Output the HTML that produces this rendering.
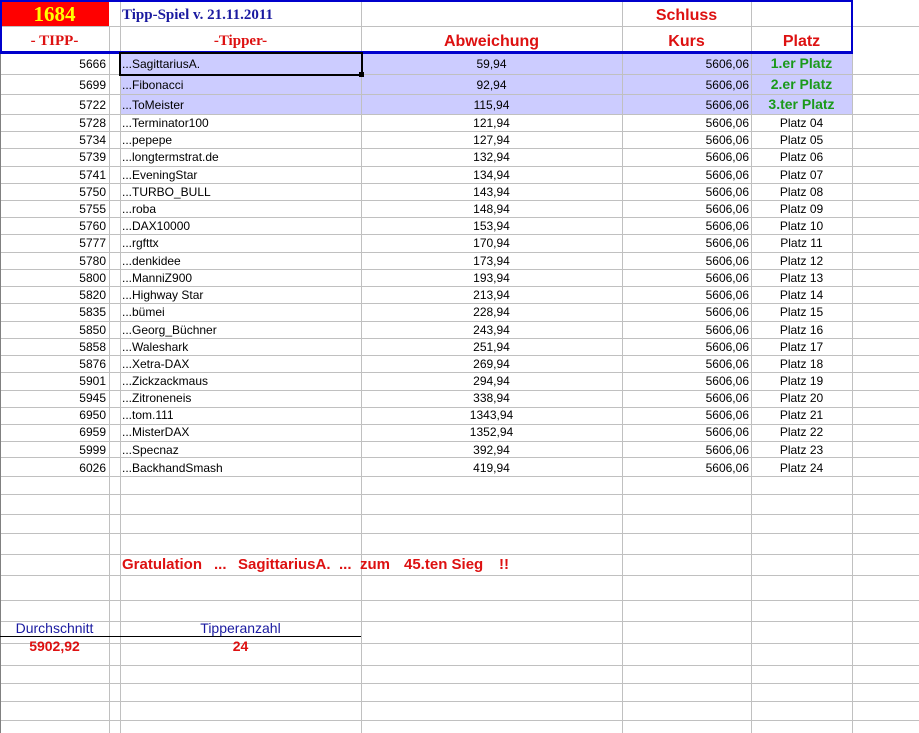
<!DOCTYPE html>
<html><head><meta charset="utf-8"><style>
body{margin:0;width:919px;height:733px;overflow:hidden;background:#fff;font-family:"Liberation Sans",Arial,sans-serif;position:relative}
.h{position:absolute;left:0;width:919px;height:1px;background:#c0c0c0}
.v{position:absolute;top:0;height:733px;width:1px;background:#c0c0c0}
.r{position:absolute;left:0;width:919px;font-size:12px;color:#000}
.r span{position:absolute;top:0;white-space:nowrap}
.a{left:0;width:106px;text-align:right}
.b{left:122px}
.c{left:361px;width:261px;text-align:center}
.d{left:622px;width:127px;text-align:right}
.e{left:751px;width:101px;text-align:center}
.g{color:#1a9a1a;font-weight:bold;font-size:14px}
.gr{position:absolute;top:556px;font:bold 15px 'Liberation Sans',sans-serif;color:#dd1111;white-space:nowrap}
</style></head><body>
<div style="position:absolute;left:120px;top:53px;width:732px;height:61px;background:#ccccff"></div>
<div style="position:absolute;left:0;top:0;width:109px;height:26px;background:#ff0000"></div>
<div class="h" style="top:26px"></div>
<div class="h" style="top:74px"></div><div class="h" style="top:94px"></div><div class="h" style="top:114px"></div>
<div class="h" style="top:131px"></div><div class="h" style="top:148px"></div><div class="h" style="top:166px"></div><div class="h" style="top:183px"></div><div class="h" style="top:200px"></div><div class="h" style="top:217px"></div><div class="h" style="top:234px"></div><div class="h" style="top:252px"></div><div class="h" style="top:269px"></div><div class="h" style="top:286px"></div><div class="h" style="top:303px"></div><div class="h" style="top:321px"></div><div class="h" style="top:338px"></div><div class="h" style="top:355px"></div><div class="h" style="top:372px"></div><div class="h" style="top:390px"></div><div class="h" style="top:407px"></div><div class="h" style="top:424px"></div><div class="h" style="top:441px"></div><div class="h" style="top:457px"></div><div class="h" style="top:476px"></div>
<div class="h" style="top:494px"></div><div class="h" style="top:514px"></div><div class="h" style="top:533px"></div><div class="h" style="top:554px"></div><div class="h" style="top:575px"></div><div class="h" style="top:600px"></div><div class="h" style="top:621px"></div><div class="h" style="top:643px"></div><div class="h" style="top:665px"></div><div class="h" style="top:683px"></div><div class="h" style="top:701px"></div><div class="h" style="top:720px"></div>
<div class="v" style="left:0;background:#808080"></div>
<div class="v" style="left:109px;top:26px;height:707px"></div><div class="v" style="left:120px"></div><div class="v" style="left:361px"></div><div class="v" style="left:622px"></div><div class="v" style="left:751px"></div><div class="v" style="left:852px"></div>
<div style="position:absolute;left:0;top:636px;width:361px;height:1px;background:#000"></div>
<div style="position:absolute;left:0;top:0;width:849px;height:49px;border:2px solid #0000cc;border-bottom-width:3px"></div>
<div style="position:absolute;left:119px;top:52px;width:240px;height:20px;border:2px solid #000"></div>
<div style="position:absolute;left:359px;top:72px;width:5px;height:5px;background:#000"></div>
<div style="position:absolute;left:0;top:2px;width:109px;text-align:center;font:bold 21px 'Liberation Serif',serif;color:#ffff00">1684</div>
<div style="position:absolute;left:122px;top:7px;font:bold 15px 'Liberation Serif',serif;color:#1a1aa0">Tipp-Spiel v. 21.11.2011</div>
<div style="position:absolute;left:0;top:33px;width:109px;text-align:center;font:bold 15px 'Liberation Serif',serif;color:#dd1111">- TIPP-</div>
<div style="position:absolute;left:120px;top:33px;width:241px;text-align:center;font:bold 15px 'Liberation Serif',serif;color:#dd1111">-Tipper-</div>
<div style="position:absolute;left:361px;top:33px;width:261px;text-align:center;font:bold 16px 'Liberation Sans',sans-serif;color:#dd1111">Abweichung</div>
<div style="position:absolute;left:622px;top:7px;width:129px;text-align:center;font:bold 16px 'Liberation Sans',sans-serif;color:#dd1111">Schluss</div>
<div style="position:absolute;left:622px;top:33px;width:129px;text-align:center;font:bold 16px 'Liberation Sans',sans-serif;color:#dd1111">Kurs</div>
<div style="position:absolute;left:751px;top:33px;width:101px;text-align:center;font:bold 16px 'Liberation Sans',sans-serif;color:#dd1111">Platz</div>
<div class="r" style="top:57px"><span class="a">5666</span><span class="b">...SagittariusA.</span><span class="c">59,94</span><span class="d">5606,06</span><span class="e g" style="top:-2px">1.er Platz</span></div>
<div class="r" style="top:78px"><span class="a">5699</span><span class="b">...Fibonacci</span><span class="c">92,94</span><span class="d">5606,06</span><span class="e g" style="top:-2px">2.er Platz</span></div>
<div class="r" style="top:98px"><span class="a">5722</span><span class="b">...ToMeister</span><span class="c">115,94</span><span class="d">5606,06</span><span class="e g" style="top:-2px">3.ter Platz</span></div>
<div class="r" style="top:116px"><span class="a">5728</span><span class="b">...Terminator100</span><span class="c">121,94</span><span class="d">5606,06</span><span class="e">Platz 04</span></div>
<div class="r" style="top:133px"><span class="a">5734</span><span class="b">...pepepe</span><span class="c">127,94</span><span class="d">5606,06</span><span class="e">Platz 05</span></div>
<div class="r" style="top:150px"><span class="a">5739</span><span class="b">...longtermstrat.de</span><span class="c">132,94</span><span class="d">5606,06</span><span class="e">Platz 06</span></div>
<div class="r" style="top:168px"><span class="a">5741</span><span class="b">...EveningStar</span><span class="c">134,94</span><span class="d">5606,06</span><span class="e">Platz 07</span></div>
<div class="r" style="top:185px"><span class="a">5750</span><span class="b">...TURBO_BULL</span><span class="c">143,94</span><span class="d">5606,06</span><span class="e">Platz 08</span></div>
<div class="r" style="top:202px"><span class="a">5755</span><span class="b">...roba</span><span class="c">148,94</span><span class="d">5606,06</span><span class="e">Platz 09</span></div>
<div class="r" style="top:219px"><span class="a">5760</span><span class="b">...DAX10000</span><span class="c">153,94</span><span class="d">5606,06</span><span class="e">Platz 10</span></div>
<div class="r" style="top:236px"><span class="a">5777</span><span class="b">...rgfttx</span><span class="c">170,94</span><span class="d">5606,06</span><span class="e">Platz 11</span></div>
<div class="r" style="top:254px"><span class="a">5780</span><span class="b">...denkidee</span><span class="c">173,94</span><span class="d">5606,06</span><span class="e">Platz 12</span></div>
<div class="r" style="top:271px"><span class="a">5800</span><span class="b">...ManniZ900</span><span class="c">193,94</span><span class="d">5606,06</span><span class="e">Platz 13</span></div>
<div class="r" style="top:288px"><span class="a">5820</span><span class="b">...Highway Star</span><span class="c">213,94</span><span class="d">5606,06</span><span class="e">Platz 14</span></div>
<div class="r" style="top:305px"><span class="a">5835</span><span class="b">...bümei</span><span class="c">228,94</span><span class="d">5606,06</span><span class="e">Platz 15</span></div>
<div class="r" style="top:323px"><span class="a">5850</span><span class="b">...Georg_Büchner</span><span class="c">243,94</span><span class="d">5606,06</span><span class="e">Platz 16</span></div>
<div class="r" style="top:340px"><span class="a">5858</span><span class="b">...Waleshark</span><span class="c">251,94</span><span class="d">5606,06</span><span class="e">Platz 17</span></div>
<div class="r" style="top:357px"><span class="a">5876</span><span class="b">...Xetra-DAX</span><span class="c">269,94</span><span class="d">5606,06</span><span class="e">Platz 18</span></div>
<div class="r" style="top:374px"><span class="a">5901</span><span class="b">...Zickzackmaus</span><span class="c">294,94</span><span class="d">5606,06</span><span class="e">Platz 19</span></div>
<div class="r" style="top:391px"><span class="a">5945</span><span class="b">...Zitroneneis</span><span class="c">338,94</span><span class="d">5606,06</span><span class="e">Platz 20</span></div>
<div class="r" style="top:408px"><span class="a">6950</span><span class="b">...tom.111</span><span class="c">1343,94</span><span class="d">5606,06</span><span class="e">Platz 21</span></div>
<div class="r" style="top:425px"><span class="a">6959</span><span class="b">...MisterDAX</span><span class="c">1352,94</span><span class="d">5606,06</span><span class="e">Platz 22</span></div>
<div class="r" style="top:443px"><span class="a">5999</span><span class="b">...Specnaz</span><span class="c">392,94</span><span class="d">5606,06</span><span class="e">Platz 23</span></div>
<div class="r" style="top:461px"><span class="a">6026</span><span class="b">...BackhandSmash</span><span class="c">419,94</span><span class="d">5606,06</span><span class="e">Platz 24</span></div>
<div class="gr" style="left:122px">Gratulation</div>
<div class="gr" style="left:214px">...</div>
<div class="gr" style="left:238px">SagittariusA.</div>
<div class="gr" style="left:339px">...</div>
<div class="gr" style="left:360px">zum</div>
<div class="gr" style="left:404px">45.ten Sieg</div>
<div class="gr" style="left:499px">!!</div>
<div style="position:absolute;left:0;top:620px;width:109px;text-align:center;font:14px 'Liberation Sans',sans-serif;color:#1a1aa0">Durchschnitt</div>
<div style="position:absolute;left:120px;top:620px;width:241px;text-align:center;font:14px 'Liberation Sans',sans-serif;color:#1a1aa0">Tipperanzahl</div>
<div style="position:absolute;left:0;top:638px;width:109px;text-align:center;font:bold 14px 'Liberation Sans',sans-serif;color:#dd1111">5902,92</div>
<div style="position:absolute;left:120px;top:638px;width:241px;text-align:center;font:bold 14px 'Liberation Sans',sans-serif;color:#dd1111">24</div>
</body></html>
